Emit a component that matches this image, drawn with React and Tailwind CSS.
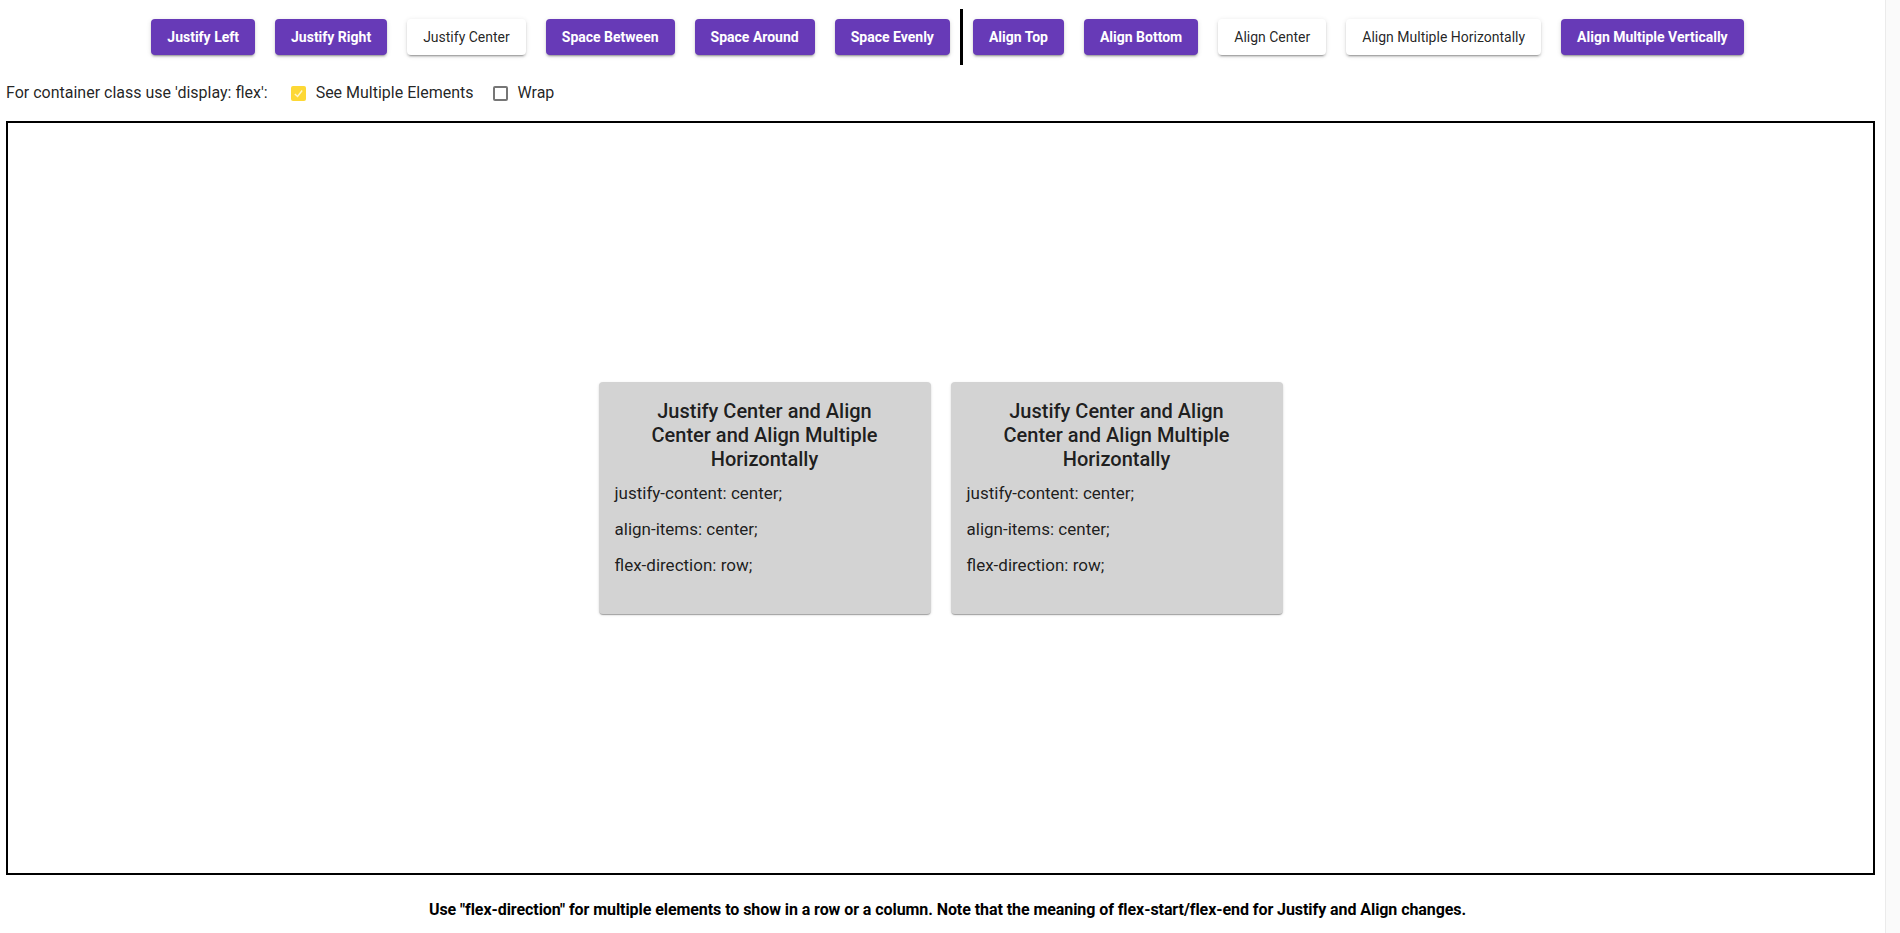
import React from "react";

const buttons = [
  { label: "Justify Left", active: true },
  { label: "Justify Right", active: true },
  { label: "Justify Center", active: false },
  { label: "Space Between", active: true },
  { label: "Space Around", active: true },
  { label: "Space Evenly", active: true },
  { divider: true },
  { label: "Align Top", active: true },
  { label: "Align Bottom", active: true },
  { label: "Align Center", active: false },
  { label: "Align Multiple Horizontally", active: false },
  { label: "Align Multiple Vertically", active: true },
];

function Btn({ label, active }) {
  return (
    <button
      className={
        "mx-[10px] h-[36px] px-4 rounded-[4px] text-[14px] leading-[24px] whitespace-nowrap shadow-[0px_3px_1px_-2px_rgba(0,0,0,0.2),0px_2px_2px_0px_rgba(0,0,0,0.14),0px_1px_5px_0px_rgba(0,0,0,0.12)] " +
        (active
          ? "bg-[#673ab7] text-white font-bold"
          : "bg-white text-[rgba(0,0,0,0.87)] font-normal")
      }
    >
      {label}
    </button>
  );
}

function Card() {
  return (
    <div className="mx-[10px] w-[332px] h-[232px] bg-[#d3d3d3] rounded-[4px] shadow-[0px_2px_1px_-1px_rgba(0,0,0,0.2),0px_1px_1px_0px_rgba(0,0,0,0.14),0px_1px_3px_0px_rgba(0,0,0,0.12)] flex flex-col pt-[17px] px-4 text-[rgba(0,0,0,0.87)]">
      <div className="px-[24px] text-center text-[20px] leading-[24px] font-medium">
        Justify Center and Align Center and Align Multiple Horizontally
      </div>
      <div className="mt-[12px] flex flex-col gap-[16px] text-[17px] leading-[20px]">
        <p>justify-content: center;</p>
        <p>align-items: center;</p>
        <p>flex-direction: row;</p>
      </div>
    </div>
  );
}

export default function App() {
  return (
    <div
      className="w-[1900px] h-[933px] overflow-hidden bg-white flex text-[rgba(0,0,0,0.87)]"
      style={{ fontFamily: "Roboto, 'Liberation Sans', sans-serif" }}
    >
      <div className="w-[1885px] flex flex-col">
        <div className="pt-[9px] pl-[10px] h-[65px] flex items-center justify-center">
          {buttons.map((b, i) =>
            b.divider ? (
              <div key={i} className="w-[3px] h-[56px] bg-black" />
            ) : (
              <Btn key={i} label={b.label} active={b.active} />
            )
          )}
        </div>
        <div className="mt-[16px] h-[24px] pl-[6px] flex items-center text-[16px] leading-[24px]">
          <span>For container class use 'display: flex':</span>
          <span className="ml-[23px] w-[15px] h-[15px] rounded-[2px] bg-[#fdd835] flex items-center justify-center">
            <svg width="11" height="11" viewBox="0 0 12 12">
              <path d="M2 6.5 L5 9.2 L10 2.8" fill="none" stroke="#fff6cc" strokeWidth="1.6" />
            </svg>
          </span>
          <span className="ml-[10px]">See Multiple Elements</span>
          <span className="ml-[19px] w-[15px] h-[15px] rounded-[2px] border-2 border-[#767676] bg-white" />
          <span className="ml-[10px]">Wrap</span>
        </div>
        <div className="mt-[16px] ml-[6px] w-[1869px] h-[754px] border-2 border-black flex items-center justify-center">
          <Card />
          <Card />
        </div>
        <div className="mt-[25px] pl-[10px] text-center text-[16px] leading-[20px] font-bold tracking-[-0.07px] text-black">
          Use "flex-direction" for multiple elements to show in a row or a column. Note that the meaning of flex-start/flex-end for Justify and Align changes.
        </div>
      </div>
      <div className="w-[15px] h-full bg-[#fafafa] border-l border-[#ebebeb]" />
    </div>
  );
}
